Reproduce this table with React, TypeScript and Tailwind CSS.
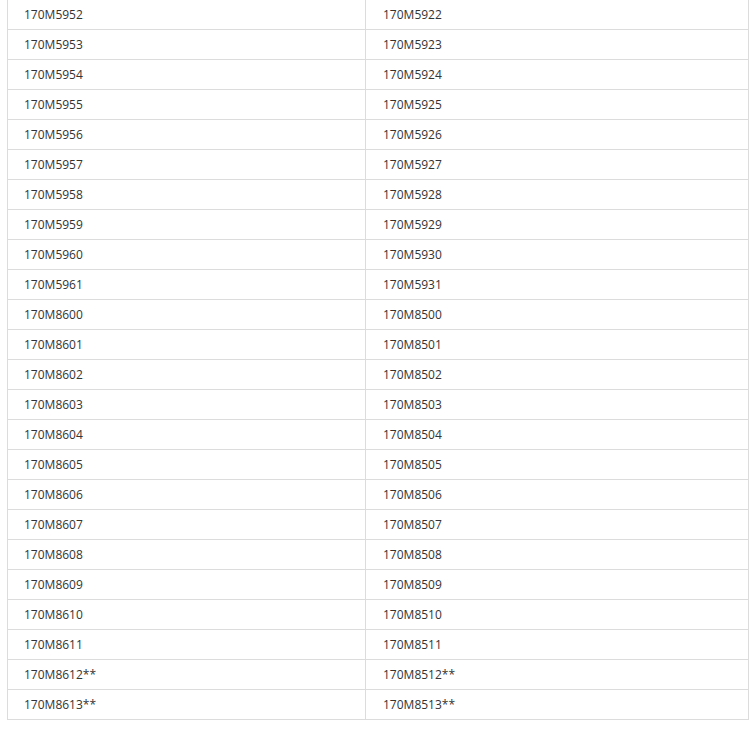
const rows: [string, string][] = [
  ['170M5952', '170M5922'],
  ['170M5953', '170M5923'],
  ['170M5954', '170M5924'],
  ['170M5955', '170M5925'],
  ['170M5956', '170M5926'],
  ['170M5957', '170M5927'],
  ['170M5958', '170M5928'],
  ['170M5959', '170M5929'],
  ['170M5960', '170M5930'],
  ['170M5961', '170M5931'],
  ['170M8600', '170M8500'],
  ['170M8601', '170M8501'],
  ['170M8602', '170M8502'],
  ['170M8603', '170M8503'],
  ['170M8604', '170M8504'],
  ['170M8605', '170M8505'],
  ['170M8606', '170M8506'],
  ['170M8607', '170M8507'],
  ['170M8608', '170M8508'],
  ['170M8609', '170M8509'],
  ['170M8610', '170M8510'],
  ['170M8611', '170M8511'],
  ['170M8612**', '170M8512**'],
  ['170M8613**', '170M8513**'],
]

export default function App() {
  return (
    <div className="min-h-[731px] bg-white pl-[7px] pr-px" style={{ fontFamily: '"Open Sans", "Liberation Sans", sans-serif' }}>
      <table className="-mt-px w-[742px] table-fixed border-collapse text-[12px] text-[#333]">
        <tbody>
          {rows.map(([a, b]) => (
            <tr key={a} className="h-[30px]">
              <td className="w-[358px] border border-[#dcdcdc] px-[16px] py-0 align-middle">{a}</td>
              <td className="border border-[#dcdcdc] px-[17px] py-0 align-middle">{b}</td>
            </tr>
          ))}
        </tbody>
      </table>
    </div>
  )
}
